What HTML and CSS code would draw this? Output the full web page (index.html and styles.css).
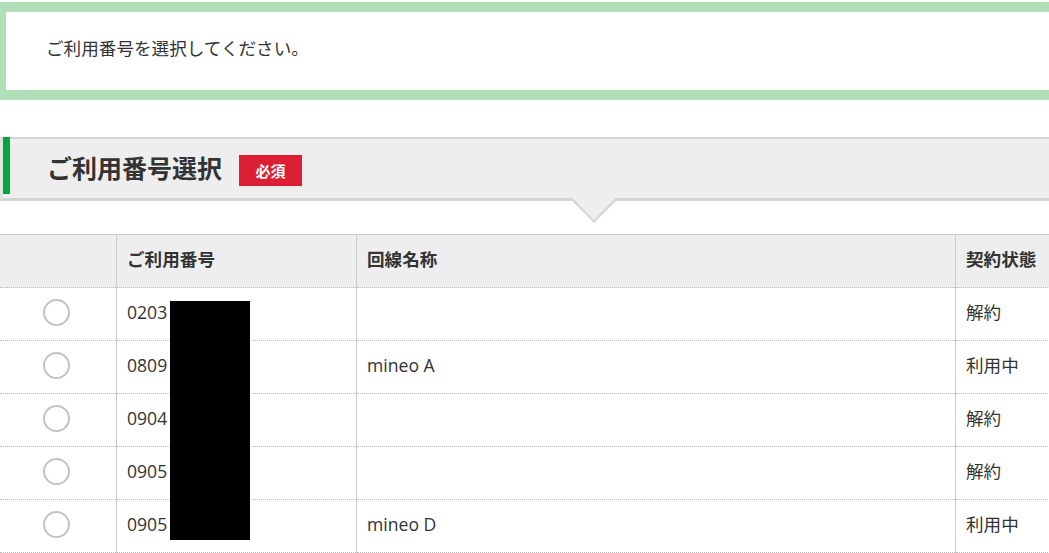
FILE: index.html
```html
<!DOCTYPE html>
<html lang="ja">
<head>
<meta charset="utf-8">
<title>ご利用番号選択</title>
<link rel="stylesheet" href="styles.css">
</head>
<body>
<div class="notice">ご利用番号を選択してください。</div>

<div class="section-head">
  <div class="bar"></div>
  <h2 class="title">ご利用番号選択</h2>
  <span class="badge">必須</span>
  <div class="notch"></div>
</div>

<div class="table-wrap">
  <table class="numbers">
    <thead>
      <tr>
        <th class="c-radio"></th>
        <th class="c-num">ご利用番号</th>
        <th class="c-name">回線名称</th>
        <th class="c-status">契約状態</th>
      </tr>
    </thead>
    <tbody>
      <tr><td class="c-radio"><span class="radio"></span></td><td>0203</td><td></td><td>解約</td></tr>
      <tr><td class="c-radio"><span class="radio"></span></td><td>0809</td><td>mineo A</td><td>利用中</td></tr>
      <tr><td class="c-radio"><span class="radio"></span></td><td>0904</td><td></td><td>解約</td></tr>
      <tr><td class="c-radio"><span class="radio"></span></td><td>0905</td><td></td><td>解約</td></tr>
      <tr><td class="c-radio"><span class="radio"></span></td><td>0905</td><td>mineo D</td><td>利用中</td></tr>
    </tbody>
  </table>
  <div class="redact"></div>
</div>
</body>
</html>
```

FILE: styles.css
```css
html, body {
  margin: 0;
  padding: 0;
  background: #fff;
}
body {
  font-family: "Open Sans", "Noto Sans CJK JP", sans-serif;
  color: #333;
  overflow: hidden;
}
.notice {
  margin: 2px -10px 0 -4px;
  border: 10px solid #b1dfb7;
  box-sizing: content-box;
  height: 74px;
  padding-bottom: 4px;
  display: flex;
  align-items: center;
  padding-left: 40px;
  font-size: 17.6px;
  line-height: 1;
}
.section-head {
  position: relative;
  margin-top: 37px;
  height: 59px;
  background: #eee;
  border-top: 2px solid #d4d4d4;
  border-bottom: 3px solid #d4d4d4;
  border-left: 3px solid #e2e2e2;
  display: flex;
  align-items: center;
}
.bar {
  align-self: flex-start;
  width: 7px;
  height: 57px;
  margin-top: -2px;
  background: #00a73c;
}
.title {
  margin: 0 0 0 37px;
  font-family: "Noto Sans CJK JP", sans-serif;
  font-size: 25px;
  font-weight: bold;
  color: #333;
  line-height: 1;
  padding-bottom: 2px;
}
.badge {
  margin-left: 17px;
  margin-top: 4px;
  width: 63px;
  height: 31px;
  background: #dc1f35;
  color: #fff;
  font-family: "Noto Sans CJK JP", sans-serif;
  font-size: 15px;
  font-weight: bold;
  display: flex;
  align-items: center;
  justify-content: center;
}
.notch {
  position: absolute;
  left: 575px;
  bottom: -18px;
  width: 30px;
  height: 30px;
  background: #eee;
  border-right: 2px solid #d4d4d4;
  border-bottom: 2px solid #d4d4d4;
  transform: rotate(45deg);
}
.table-wrap {
  position: relative;
  margin-top: 33px;
}
.numbers {
  width: 1060px;
  border-collapse: collapse;
  table-layout: fixed;
  font-size: 17.6px;
}
.numbers th, .numbers td {
  height: 49px;
  padding: 0 0 3px 10px;
  text-align: left;
  vertical-align: middle;
  border-left: 1px solid #ccc;
  border-bottom: 1px dotted #bbb;
  line-height: 1;
}
.numbers th {
  background: #eee;
  font-weight: bold;
  border-top: 1px solid #ccc;
}
.numbers th:first-child, .numbers td:first-child {
  border-left: none;
}
.c-radio { width: 116px; text-align: center !important; padding: 0 0 3px 0 !important; }
.c-num { width: 229px; }
.c-name { width: 588px; }
.radio {
  display: inline-block;
  width: 23px;
  height: 23px;
  border: 2px solid #c2c2c2;
  border-radius: 50%;
  vertical-align: middle;
  margin-left: -4px;
}
.redact {
  position: absolute;
  left: 170px;
  top: 67px;
  width: 80px;
  height: 239px;
  background: #000;
}
```
